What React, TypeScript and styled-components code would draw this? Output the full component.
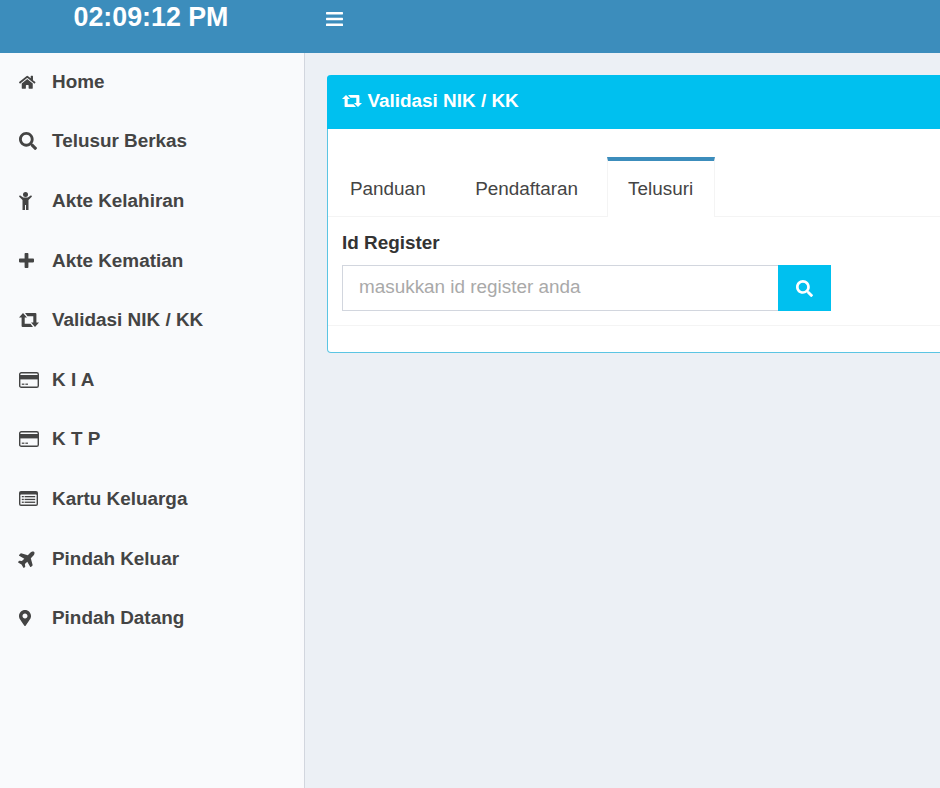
import { styled, createGlobalStyle } from 'styled-components';
import { FaHome, FaMapMarkerAlt, FaPlane, FaSearch } from 'react-icons/fa';

const GlobalStyle = createGlobalStyle`
  html, body {
    margin: 0;
    height: 100%;
    overflow: hidden;
  }
  * {
    box-sizing: border-box;
  }
  body {
    font-family: "Liberation Sans", Arial, sans-serif;
    font-size: 18.9px;
    color: #333333;
    background: #ecf0f5;
  }
`;

const Page = styled.div`
  display: flex;
  flex-flow: column nowrap;
  width: 940px;
  height: 788px;
  overflow: hidden;
`;

const TopBar = styled.header`
  flex: 0 0 53px;
  display: flex;
  background: #3c8dbc;
`;

const Clock = styled.div`
  flex: 0 0 305px;
  padding: 1px 3px 0 0;
  text-align: center;
  font-size: 26.8px;
  line-height: 32px;
  font-weight: 700;
  color: #ffffff;
`;

const MenuToggle = styled.div`
  display: flex;
  align-items: flex-start;
  padding: 12px 0 0 21px;
  color: #ffffff;
`;

const Body = styled.div`
  flex: 1;
  display: flex;
  min-height: 0;
`;

const Sidebar = styled.nav`
  flex: 0 0 305px;
  display: flex;
  flex-flow: column nowrap;
  background: #f9fafc;
  border-right: 1.5px solid #d2d6de;
`;

const MenuItem = styled.a`
  flex: 0 0 59.6px;
  display: flex;
  align-items: center;
  padding: 0 0 2px 19px;
  font-weight: 700;
  color: #444444;
`;

const MenuIcon = styled.span`
  flex: 0 0 33px;
  display: flex;
  align-items: center;
`;

const PlaneIcon = styled(FaPlane)`
  margin-left: -1px;
  font-size: 19px;
  transform: rotate(-45deg);
`;

const MarkerIcon = styled(FaMapMarkerAlt)`
  margin-left: -2px;
  font-size: 16px;
`;

const Main = styled.main`
  flex: 1;
  min-width: 0;
  padding: 22px 0 0 22px;
`;

const Card = styled.section`
  width: 800px;
  height: 278px;
  background: #ffffff;
  border: 1.5px solid #5bc5e3;
  border-top: 0;
  border-radius: 4px;
  display: flex;
  flex-flow: column nowrap;
`;

const CardHeader = styled.div`
  flex: 0 0 54px;
  display: flex;
  align-items: center;
  gap: 6px;
  margin: 0 -1.5px;
  padding: 0 0 3px 15px;
  background: #00c0ef;
  border-radius: 4px 4px 0 0;
  color: #ffffff;
  font-weight: 700;
`;

const TabList = styled.div`
  display: flex;
  align-items: flex-end;
  height: 88px;
  padding-left: 1px;
  border-bottom: 1.33px solid #f4f4f4;
`;

const Tab = styled.div<{ $active?: boolean }>`
  height: 60px;
  margin-right: 7.5px;
  margin-bottom: -1.33px;
  padding: 0 ${({ $active }) => ($active ? '20.5px' : '20px')};
  line-height: 56px;
  color: #444444;
  background: ${({ $active }) => ($active ? '#ffffff' : 'transparent')};
  border-top: 4px solid ${({ $active }) => ($active ? '#3c8dbc' : 'transparent')};
  border-left: 1.33px solid ${({ $active }) => ($active ? '#f4f4f4' : 'transparent')};
  border-right: 1.33px solid ${({ $active }) => ($active ? '#f4f4f4' : 'transparent')};
`;

const FormBlock = styled.div`
  padding: 13px 0 14px 14px;
  border-bottom: 1.33px solid #f4f4f4;
`;

const Label = styled.label`
  display: block;
  margin-bottom: 9px;
  font-weight: 700;
  line-height: 26px;
`;

const InputGroup = styled.div`
  display: flex;
  width: 489px;
  height: 46px;
`;

const Input = styled.input`
  flex: 1;
  min-width: 0;
  padding: 0 16px 2px;
  font: inherit;
  color: #555555;
  background: #ffffff;
  border: 1.33px solid #d2d6de;
  border-right: 0;
  border-radius: 0;
  outline: none;

  &::placeholder {
    color: #a9a9a9;
    opacity: 1;
  }
`;

const SearchButton = styled.button`
  flex: 0 0 53px;
  display: flex;
  align-items: center;
  justify-content: center;
  padding: 0;
  font-size: 17px;
  color: #ffffff;
  background: #00c0ef;
  border: 0;
`;

function BarsIcon() {
  return (
    <svg width="17" height="14" viewBox="0 0 17 14" fill="currentColor">
      <rect y="0" width="17" height="2.4" rx="0.6" />
      <rect y="5.8" width="17" height="2.4" rx="0.6" />
      <rect y="11.6" width="17" height="2.4" rx="0.6" />
    </svg>
  );
}

function RetweetIcon({ height = 14 }: { height?: number }) {
  const half = 'M4 0 L8 4.6 H5.7 V10.7 H11.5 L14 14 H3.6 Q2.6 14 2.6 13 V4.6 H0 Z';
  return (
    <svg width="20" height={height} viewBox="0 0 20 14" preserveAspectRatio="none" fill="currentColor">
      <path d={half} />
      <path d={half} transform="rotate(180 10 7)" />
    </svg>
  );
}

function ChildIcon() {
  return (
    <svg width="13" height="18" viewBox="0 0 13 18" fill="currentColor">
      <circle cx="6.5" cy="2.6" r="2.5" />
      <path d="M0.9 3.2 L4.2 5.6 H8.8 L12.1 3.2 L13 4.4 L9.5 8 V18 H7 V13 H6 V18 H3.5 V8 L0 4.4 Z" />
    </svg>
  );
}

function PlusIcon() {
  return (
    <svg width="15" height="15" viewBox="0 0 15 15" fill="currentColor">
      <path d="M5.6 0.8 Q5.6 0 6.4 0 H8.6 Q9.4 0 9.4 0.8 V5.6 H14.2 Q15 5.6 15 6.4 V8.6 Q15 9.4 14.2 9.4 H9.4 V14.2 Q9.4 15 8.6 15 H6.4 Q5.6 15 5.6 14.2 V9.4 H0.8 Q0 9.4 0 8.6 V6.4 Q0 5.6 0.8 5.6 H5.6 Z" />
    </svg>
  );
}

function CardIcon() {
  return (
    <svg width="20" height="16" viewBox="0 0 20 16" fill="currentColor">
      <rect x="0.7" y="0.7" width="18.6" height="14.6" rx="1.6" fill="none" stroke="currentColor" strokeWidth="1.4" />
      <rect x="1" y="3" width="18" height="4.4" />
      <rect x="2.8" y="11.6" width="2.6" height="1.2" />
      <rect x="6.4" y="11.6" width="2.6" height="1.2" />
    </svg>
  );
}

function ListIcon() {
  return (
    <svg width="19" height="15" viewBox="0 0 19 15" fill="currentColor">
      <rect width="19" height="15" rx="2" />
      <rect x="1.4" y="3.6" width="16.2" height="10" rx="0.6" fill="#f9fafc" />
      <rect x="2.8" y="5" width="2" height="1.3" />
      <rect x="5.6" y="5" width="10.6" height="1.3" />
      <rect x="2.8" y="7.8" width="2" height="1.3" />
      <rect x="5.6" y="7.8" width="10.6" height="1.3" />
      <rect x="2.8" y="10.6" width="2" height="1.3" />
      <rect x="5.6" y="10.6" width="10.6" height="1.3" />
    </svg>
  );
}

const menu: { label: string; icon: React.ReactNode }[] = [
  { label: 'Home', icon: <FaHome size={16.5} /> },
  { label: 'Telusur Berkas', icon: <FaSearch size={18} /> },
  { label: 'Akte Kelahiran', icon: <ChildIcon /> },
  { label: 'Akte Kematian', icon: <PlusIcon /> },
  { label: 'Validasi NIK / KK', icon: <RetweetIcon /> },
  { label: 'K I A', icon: <CardIcon /> },
  { label: 'K T P', icon: <CardIcon /> },
  { label: 'Kartu Keluarga', icon: <ListIcon /> },
  { label: 'Pindah Keluar', icon: <PlaneIcon /> },
  { label: 'Pindah Datang', icon: <MarkerIcon /> },
];

export default function App(): React.ReactNode {
  return (
    <Page>
      <GlobalStyle />
      <TopBar>
        <Clock>02:09:12 PM</Clock>
        <MenuToggle>
          <BarsIcon />
        </MenuToggle>
      </TopBar>
      <Body>
        <Sidebar>
          {menu.map(({ label, icon }) => (
            <MenuItem key={label}>
              <MenuIcon>{icon}</MenuIcon>
              {label}
            </MenuItem>
          ))}
        </Sidebar>
        <Main>
          <Card>
            <CardHeader>
              <RetweetIcon height={12} />
              Validasi NIK / KK
            </CardHeader>
            <TabList>
              <Tab>Panduan</Tab>
              <Tab>Pendaftaran</Tab>
              <Tab $active>Telusuri</Tab>
            </TabList>
            <FormBlock>
              <Label>Id Register</Label>
              <InputGroup>
                <Input placeholder="masukkan id register anda" />
                <SearchButton>
                  <FaSearch />
                </SearchButton>
              </InputGroup>
            </FormBlock>
          </Card>
        </Main>
      </Body>
    </Page>
  );
}
